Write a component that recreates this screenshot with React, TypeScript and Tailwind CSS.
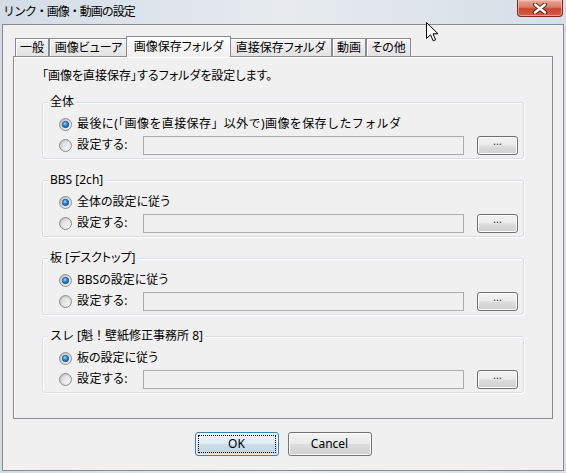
import { useId } from "react";

function Radio({ checked = false }: { checked?: boolean }) {
  const id = useId().replace(/:/g, "");
  return (
    <svg width="13" height="13" viewBox="0 0 13 13" className="shrink-0">
      <defs>
        <linearGradient id={`o${id}`} x1="0" y1="0" x2="1" y2="1">
          <stop offset="0" stopColor="#b9b9b9" />
          <stop offset="1" stopColor="#f7f7f7" />
        </linearGradient>
        <linearGradient id={`i${id}`} x1="0" y1="0" x2="1" y2="1">
          <stop offset="0" stopColor="#d4d4d4" />
          <stop offset="1" stopColor="#fbfbfb" />
        </linearGradient>
        <radialGradient id={`d${id}`} cx="0.4" cy="0.35" r="0.7">
          <stop offset="0" stopColor="#a9dcf9" />
          <stop offset="0.45" stopColor="#2f8fe0" />
          <stop offset="1" stopColor="#0b4fa8" />
        </radialGradient>
      </defs>
      <circle cx="6.5" cy="6.5" r="6" fill={`url(#o${id})`} stroke="#8e8f8f" strokeWidth="1" />
      <circle cx="6.5" cy="6.5" r="4.2" fill={`url(#i${id})`} />
      {checked && (
        <circle cx="6.5" cy="6.5" r="3.2" fill={`url(#d${id})`} stroke="#1a4c8c" strokeWidth="0.8" />
      )}
    </svg>
  );
}

function Tab({ label, width, active = false }: { label: string; width: number; active?: boolean }) {
  if (active) {
    return (
      <div
        style={{ width }}
        className="relative z-10 -mx-[2px] -mb-[1px] flex h-[21px] items-start justify-center border-x border-t border-[#898c95] bg-gradient-to-b from-white to-[#f0f0f0] pt-[2px]"
      >
        {label}
      </div>
    );
  }
  return (
    <div
      style={{ width }}
      className="flex h-[18px] items-center justify-center border-x border-t border-[#898c95] bg-gradient-to-b from-[#f4f4f4] to-[#e2e2e2] shadow-[inset_1px_1px_0_#fff]"
    >
      {label}
    </div>
  );
}

function GrayButton({ className, children }: { className: string; children: React.ReactNode }) {
  return (
    <button
      className={`flex items-center justify-center rounded-[3px] border border-[#707070] bg-[linear-gradient(#f2f2f2_0%,#ebebeb_48%,#dddddd_52%,#cfcfcf_100%)] shadow-[inset_0_0_0_1px_#fcfcfc] ${className}`}
    >
      {children}
    </button>
  );
}

function Group({
  title,
  first,
  wide = false,
  fullTitle = false,
}: {
  title: string;
  first: string;
  wide?: boolean;
  fullTitle?: boolean;
}) {
  return (
    <div className="flex h-[57px] flex-col rounded-[3px] border border-[#d5dfe5] shadow-[1px_1px_0_#fff,inset_1px_1px_0_#fff]">
      <div
        className={
          fullTitle
            ? "-mt-[9px] ml-[5px] w-fit bg-[#f0f0f0] px-[2px] leading-[16px] [font-feature-settings:normal]"
            : "-mt-[9px] ml-[5px] w-fit bg-[#f0f0f0] px-[2px] leading-[16px]"
        }
      >
        {title}
      </div>
      <div className="mt-[4px] flex h-[20px] items-center pl-[16px]">
        <Radio checked />
        <span className={wide ? "ml-[5px] tracking-[0.4px] [font-feature-settings:normal]" : "ml-[5px]"}>{first}</span>
      </div>
      <div className="mt-[1px] flex h-[20px] items-center pl-[16px] pr-[5px]">
        <Radio />
        <span className="ml-[5px] w-[66px] tracking-[0.4px]">設定する:</span>
        <div className="h-[19px] flex-1 border border-[#acacac] bg-[#f0f0f0]" />
        <GrayButton className="ml-[13px] h-[19px] w-[41px] pb-[9px] text-[11px] leading-none text-[#333]">...</GrayButton>
      </div>
    </div>
  );
}

export default function App() {
  return (
    <div className="relative flex h-[473px] w-[566px] flex-col bg-gradient-to-r from-[#d3dce6] via-[#e7ebef] to-[#d6dee8] px-[2px] pb-[2px] font-['Noto_Sans','Noto_Sans_CJK_JP',sans-serif] text-[12px] leading-[16px] text-black [font-feature-settings:'palt']">
      {/* caption bar */}
      <div className="flex h-[24px] items-start">
        <div className="pl-[1px] pt-[4px] tracking-[-1px] [font-feature-settings:normal]">リンク・画像・動画の設定</div>
        <div className="ml-auto mr-[1px] flex h-[17px] w-[46px] items-center justify-center rounded-b-[4px] border border-t-0 border-[#7b2a1f] bg-[linear-gradient(#eaa999_0%,#dc7863_45%,#c8452f_55%,#d0604a_100%)] shadow-[inset_0_0_0_1px_rgba(255,220,210,0.5)]">
          <svg width="16" height="11" viewBox="0 0 16 11">
            <path d="M3 1.5 L13 9.5 M13 1.5 L3 9.5" stroke="#5c1c12" strokeWidth="4.2" strokeLinecap="round" />
            <path d="M3 1.5 L13 9.5 M13 1.5 L3 9.5" stroke="#ffffff" strokeWidth="2.4" strokeLinecap="round" />
          </svg>
        </div>
      </div>

      {/* client area */}
      <div className="flex flex-1 flex-col border border-[#878c93] bg-[#f0f0f0]">
        <div className="px-[10px] pt-[11px]">
          <div className="flex h-[20px] items-end pl-[2px]">
            <Tab label="一般" width={34} />
            <Tab label="画像ビューア" width={79} />
            <Tab label="画像保存フォルダ" width={105} active />
            <Tab label="直接保存フォルダ" width={103} />
            <Tab label="動画" width={34} />
            <Tab label="その他" width={45} />
          </div>
          <div className="flex h-[363px] flex-col border border-[#898c95] bg-[#f0f0f0] px-[28px] pt-[11px] shadow-[inset_1px_1px_0_#fff]">
            <div className="h-[16px]">「画像を直接保存」するフォルダを設定します。</div>
            <div className="mt-[18px] flex flex-col gap-[21px]">
              <Group title="全体" first="最後に(「画像を直接保存」以外で)画像を保存したフォルダ" wide />
              <Group title="BBS [2ch]" first="全体の設定に従う" />
              <Group title="板 [デスクトップ]" first="BBSの設定に従う" />
              <Group title="スレ [魁！壁紙修正事務所 8]" first="板の設定に従う" fullTitle />
            </div>
          </div>
        </div>

        <div className="mt-[13px] flex justify-center gap-[9px]">
          <button className="h-[24px] w-[84px] rounded-[3px] border border-[#3c7fb1] bg-[linear-gradient(#ebf4fa_0%,#dfecf5_48%,#c9dce9_52%,#c3d8e6_100%)] p-[2px] shadow-[inset_0_0_0_1px_#f4f9fc]">
            <span className="flex h-full w-full items-center justify-center border border-dotted border-black">OK</span>
          </button>
          <GrayButton className="h-[24px] w-[84px]">Cancel</GrayButton>
        </div>
      </div>

      {/* mouse pointer */}
      <svg className="absolute left-[426px] top-[22px]" width="13" height="20" viewBox="0 0 13 20">
        <path d="M0.5 0.5 L0.5 16.5 L4.5 12.8 L7.2 18.8 L9.6 17.8 L7 11.8 L12 11.8 Z" fill="#fff" stroke="#000" strokeWidth="1" strokeLinejoin="miter" />
      </svg>
    </div>
  );
}
